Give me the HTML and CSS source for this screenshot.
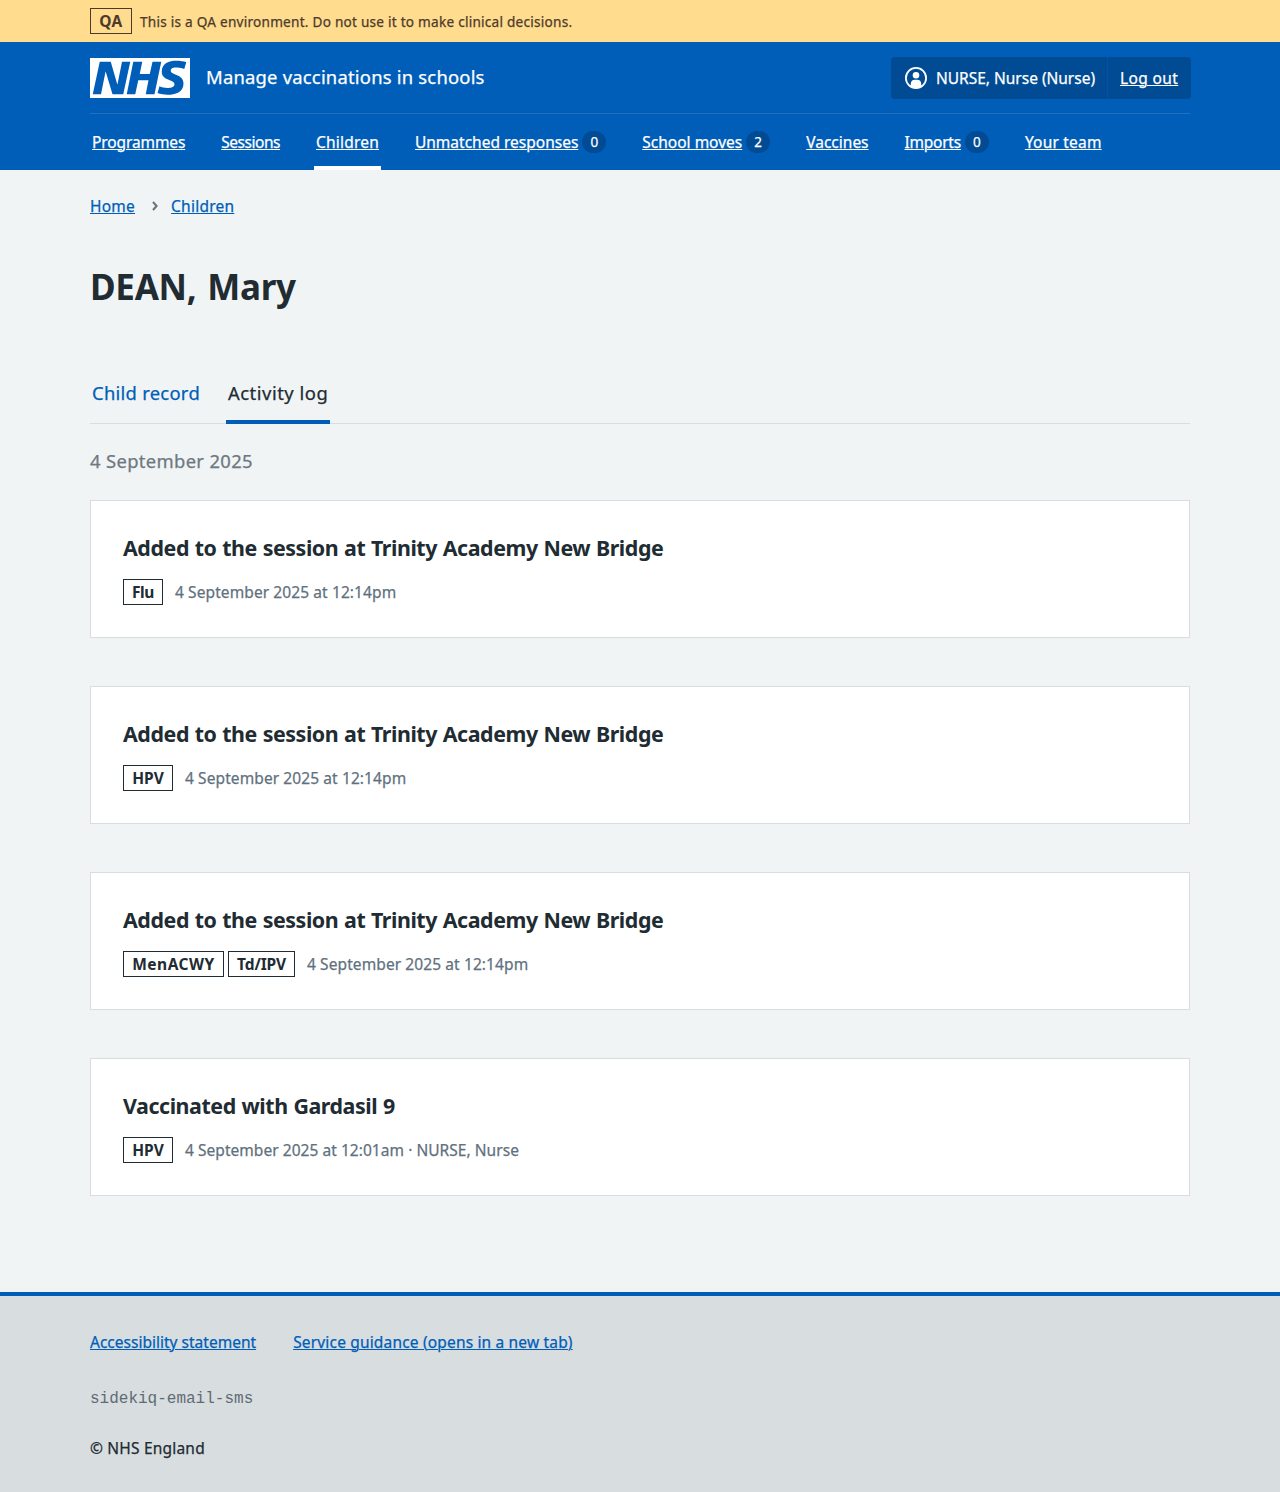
FILE: index.html
```
<!DOCTYPE html>
<html lang="en">
<head>
<meta charset="utf-8">
<title>DEAN, Mary – Manage vaccinations in schools</title>
<link rel="stylesheet" href="styles.css">
</head>
<body>
<div class="environment">
  <div class="container environment__inner">
    <strong class="tag tag--environment">QA</strong>
    <span class="environment__text">This is a QA environment. Do not use it to make clinical decisions.</span>
  </div>
</div>
<header class="header">
  <div class="container">
    <div class="header__top">
      <a class="header__service" href="#">
        <svg class="logo" viewBox="0 0 40 16" role="img" aria-label="NHS"><path fill="#fff" d="M0 0h40v16H0z"/><path fill="#005eb8" d="M3.9 1.5h4.4l2.6 9h.1l1.8-9h3.3l-2.8 13H9l-2.7-9h-.1l-1.8 9H1.1M17.3 1.5h3.6l-1 4.9h4L25 1.5h3.5l-2.7 13h-3.5l1.1-5.6h-4.1l-1.2 5.6h-3.4M37.7 4.4c-.7-.3-1.6-.6-2.9-.6-1.4 0-2.5.2-2.5 1.3 0 1.8 5.1 1.2 5.1 5.1 0 3.6-3.3 4.5-6.4 4.5-1.3 0-2.9-.3-4-.7l.8-2.7c.7.4 2.1.7 3.2.7s2.8-.2 2.8-1.5c0-2.1-5.1-1.3-5.1-5 0-3.4 2.9-4.4 5.8-4.4 1.6 0 3.1.2 4 .6"/></svg>
        <span class="header__name">Manage vaccinations in schools</span>
      </a>
      <div class="account">
        <div class="account__item account__item--user">
          <svg class="account__icon" viewBox="0 0 22 22" aria-hidden="true"><circle cx="11" cy="11" r="10.1" fill="none" stroke="#fff" stroke-width="1.8"/><circle cx="11" cy="8.2" r="3.3" fill="#fff"/><path fill="#fff" d="M5.8 19.3v-2.8a4 4 0 0 1 4-3.8h2.4a4 4 0 0 1 4 3.8v2.8a10 10 0 0 1-10.400 0z"/></svg>
          <span class="account__name">NURSE, Nurse (Nurse)</span>
        </div>
        <div class="account__item"><a class="account__link" href="#">Log out</a></div>
      </div>
    </div>
    <nav class="nav">
      <a class="nav__item" href="#"><span class="nav__label nav__label--snug">Programmes</span></a>
      <a class="nav__item" href="#"><span class="nav__label nav__label--narrow">Sessions</span></a>
      <a class="nav__item nav__item--current" href="#"><span class="nav__label nav__label--wide">Children</span></a>
      <a class="nav__item" href="#"><span class="nav__label">Unmatched responses</span><span class="count">0</span></a>
      <a class="nav__item" href="#"><span class="nav__label">School moves</span><span class="count">2</span></a>
      <a class="nav__item" href="#"><span class="nav__label">Vaccines</span></a>
      <a class="nav__item" href="#"><span class="nav__label nav__label--tight">Imports</span><span class="count">0</span></a>
      <a class="nav__item" href="#"><span class="nav__label nav__label--wide">Your team</span></a>
    </nav>
  </div>
</header>
<main class="container main">
  <nav class="breadcrumb">
    <a class="link" href="#">Home</a>
    <svg class="breadcrumb__chevron" viewBox="0 0 6 10" aria-hidden="true"><path d="M1 1l3.600 4L1 9" fill="none" stroke="#6b7178" stroke-width="2"/></svg>
    <a class="link" href="#">Children</a>
  </nav>
  <h1 class="title">DEAN, Mary</h1>
  <nav class="tabs">
    <a class="tabs__item" href="#">Child record</a>
    <a class="tabs__item tabs__item--current" href="#">Activity log</a>
  </nav>
  <h2 class="day">4 September 2025</h2>
  <div class="events">
    <article class="card">
      <h3 class="card__title">Added to the session at Trinity Academy New Bridge</h3>
      <div class="card__meta"><strong class="tag tag--flu">Flu</strong><span class="card__time">4 September 2025 at 12:14pm</span></div>
    </article>
    <article class="card">
      <h3 class="card__title">Added to the session at Trinity Academy New Bridge</h3>
      <div class="card__meta"><strong class="tag">HPV</strong><span class="card__time">4 September 2025 at 12:14pm</span></div>
    </article>
    <article class="card">
      <h3 class="card__title">Added to the session at Trinity Academy New Bridge</h3>
      <div class="card__meta"><strong class="tag tag--menacwy">MenACWY</strong><strong class="tag tag--tdipv">Td/IPV</strong><span class="card__time">4 September 2025 at 12:14pm</span></div>
    </article>
    <article class="card">
      <h3 class="card__title">Vaccinated with Gardasil 9</h3>
      <div class="card__meta"><strong class="tag">HPV</strong><span class="card__time card__time--author">4 September 2025 at 12:01am · NURSE, Nurse</span></div>
    </article>
  </div>
</main>
<footer class="footer">
  <div class="container">
    <div class="footer__links">
      <a class="link link--statement" href="#">Accessibility statement</a>
      <a class="link link--guidance" href="#">Service guidance (opens in a new tab)</a>
    </div>
    <code class="footer__version">sidekiq-email-sms</code>
    <p class="footer__copyright">© NHS England</p>
  </div>
</footer>
</body>
</html>
```
FILE: styles.css
```
*, *::before, *::after { box-sizing: border-box; }

body {
  margin: 0;
  background: #f0f4f5;
  color: #212b32;
  font: 400 15.5px/24px "Noto Sans", "Open Sans", sans-serif;
  white-space: nowrap;
  -webkit-text-stroke: 0.25px;
}

h1, h2, h3, p { margin: 0; }
h1, h3, strong, code { -webkit-text-stroke: 0; }

.container { width: 1100px; margin: 0 auto; }

.link {
  color: #005eb8;
  letter-spacing: 0.24px;
  text-decoration: underline 1px;
  text-underline-offset: 1px;
}

.tag {
  display: block;
  width: 50px;
  height: 26px;
  border: 1px solid #212b32;
  color: #212b32;
  font-weight: 700;
  line-height: 24px;
  text-align: center;
}
.tag--flu { width: 40px; letter-spacing: -0.4px; }
.tag--menacwy { width: 101px; letter-spacing: 0.5px; }
.tag--tdipv { width: 67px; margin-left: 4px; letter-spacing: -0.15px; }
.tag--environment { width: 42px; border-color: #4d3a2c; color: #4d3a2c; letter-spacing: 0.4px; }

.environment { height: 42px; padding: 8px 0; background: #ffdc8e; color: #4d3a2c; }
.environment__inner { display: flex; gap: 8px; }
.environment__text { font-size: 13.6px; line-height: 27px; letter-spacing: 0.245px; }

.header { height: 128px; background: #005eb8; color: #fff; }
.header a { color: #fff; }
.header__top {
  display: flex;
  justify-content: space-between;
  height: 71px;
  margin-right: -1px;
  padding-top: 15px;
}
.header__service { display: flex; gap: 16px; height: 42px; padding-top: 1px; text-decoration: none; }
.logo { display: block; width: 100px; height: 40px; }
.header__name { font-size: 18.4px; line-height: 37px; letter-spacing: 0.22px; }

.account { display: flex; height: 42px; border-radius: 4px; background: #004b93; }
.account__item { display: flex; align-items: center; padding: 0 12px; }
.account__item--user { width: 217px; padding: 0 0 0 14px; border-right: 1px solid #0053a5; }
.account__icon { flex: none; width: 22px; height: 22px; margin-right: 9px; }
.account__name { letter-spacing: -0.01px; }
.account__link { width: 59px; letter-spacing: 0.37px; text-decoration: underline 1px; text-underline-offset: 1px; }

.nav { display: flex; gap: 32px; height: 57px; border-top: 1px solid #266fc0; }
.nav__item { display: flex; padding: 16px 2px 0; text-decoration: none; }
.nav__item--current { border-bottom: 4px solid #fff; }
.nav__label { letter-spacing: 0; text-decoration: underline 1px; text-underline-offset: 1px; }
.nav__label--narrow { letter-spacing: -0.46px; }
.nav__label--tight { letter-spacing: -0.25px; }
.nav__label--snug { letter-spacing: -0.11px; }
.nav__label--wide { letter-spacing: 0.2px; }
.count {
  width: 24px;
  height: 22px;
  margin: 1px 0 0 4px;
  border-radius: 12px;
  background: #004b93;
  font-size: 13.5px;
  line-height: 23px;
  text-align: center;
}

.main { padding-top: 24px; }
.breadcrumb { display: flex; align-items: center; height: 24px; }
.breadcrumb__chevron { width: 6px; height: 10px; margin: 0 13px 0 17px; }

.title { margin-top: 45px; font-size: 35px; line-height: 48px; letter-spacing: -0.28px; word-spacing: 2px; }

.tabs { display: flex; gap: 24px; height: 49px; margin-top: 64px; border-bottom: 1px solid #d8dde0; }
.tabs__item {
  height: 49px;
  padding: 4px 2px 0;
  color: #005eb8;
  font-size: 18.4px;
  line-height: 28px;
  letter-spacing: 0.275px;
  text-decoration: none;
}
.tabs__item--current { border-bottom: 4px solid #005eb8; color: #212b32; letter-spacing: 0.53px; }

.day { margin-top: 23px; color: #6d7880; font-size: 18.4px; font-weight: 400; line-height: 28px; letter-spacing: 0.34px; }

.events { display: grid; gap: 48px; margin-top: 25px; }
.card { height: 138px; padding: 32px; border: 1px solid #d8dde0; background: #fff; }
.card__title { font-size: 21.4px; line-height: 30px; letter-spacing: -0.43px; word-spacing: 0.6px; }
.card__meta { display: flex; margin-top: 16px; }
.card__time { margin-left: 12px; color: #5f717e; line-height: 26px; letter-spacing: 0.095px; }
.card__time--author { letter-spacing: 0.045px; }

.footer { height: 200px; margin-top: 96px; padding-top: 34px; border-top: 4px solid #005eb8; background: #d8dde0; }
.footer__links { display: flex; gap: 37px; }
.link--statement { letter-spacing: 0.01px; }
.link--guidance { letter-spacing: 0.17px; }
.footer__version { display: block; margin-top: 33px; color: #5f6b74; font: 16px/24px "Liberation Mono", monospace; }
.footer__copyright { margin-top: 25px; letter-spacing: 0.2px; }
```
